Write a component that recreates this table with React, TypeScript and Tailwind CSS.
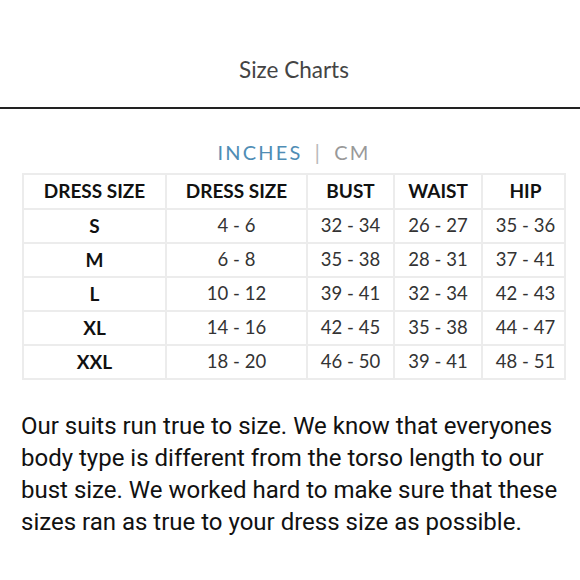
const headers = ['DRESS SIZE', 'DRESS SIZE', 'BUST', 'WAIST', 'HIP'];

const rows = [
  ['S', '4 - 6', '32 - 34', '26 - 27', '35 - 36'],
  ['M', '6 - 8', '35 - 38', '28 - 31', '37 - 41'],
  ['L', '10 - 12', '39 - 41', '32 - 34', '42 - 43'],
  ['XL', '14 - 16', '42 - 45', '35 - 38', '44 - 47'],
  ['XXL', '18 - 20', '46 - 50', '39 - 41', '48 - 51'],
];

const cols = 'grid-cols-[141px_141px_87px_88px_87px]';

export default function App() {
  return (
    <div className="w-[580px] h-[580px] bg-white overflow-hidden font-['Lato',sans-serif] text-[#333]">
      <div className="h-[107px] flex items-start justify-center pt-[57px] pl-[8px]">
        <h1 className="text-[22.5px] leading-[26px] text-[#444]">Size Charts</h1>
      </div>
      <div className="h-[2px] bg-[#222]" />

      <div className="flex items-center justify-center gap-[12px] pt-[31px] pb-[9px] pl-[8px] text-[20px] leading-[24px] tracking-[0.11em]">
        <span className="text-[#4f8db5]">INCHES</span>
        <span className="text-[#bbb] text-[22px]">|</span>
        <span className="text-[#999]">CM</span>
      </div>

      <div className="mx-[22px] w-[544px] border-2 border-[#ececec]">
        <div className={`grid ${cols} h-[33px]`}>
          {headers.map((h, i) => (
            <div
              key={i}
              className={`flex items-center justify-center font-bold text-[19px] text-[#111] ${i > 0 ? 'border-l-2 border-[#ececec]' : ''}`}
            >
              {h}
            </div>
          ))}
        </div>
        {rows.map((r) => (
          <div key={r[0]} className={`grid ${cols} h-[34px] border-t-2 border-[#ececec]`}>
            {r.map((c, i) => (
              <div
                key={i}
                className={`flex items-center justify-center text-[18.5px] ${i === 0 ? 'font-bold text-[19px] text-[#111]' : 'text-[#333] border-l-2 border-[#ececec]'}`}
              >
                {c}
              </div>
            ))}
          </div>
        ))}
      </div>

      <p className="mt-[30px] px-[21px] font-['Roboto',sans-serif] text-[24px] leading-[32px] text-[#111]">
        Our suits run true to size. We know that everyones body type is different from the torso length to our
        bust size. We worked hard to make sure that these sizes ran as true to your dress size as possible.
      </p>
    </div>
  );
}
